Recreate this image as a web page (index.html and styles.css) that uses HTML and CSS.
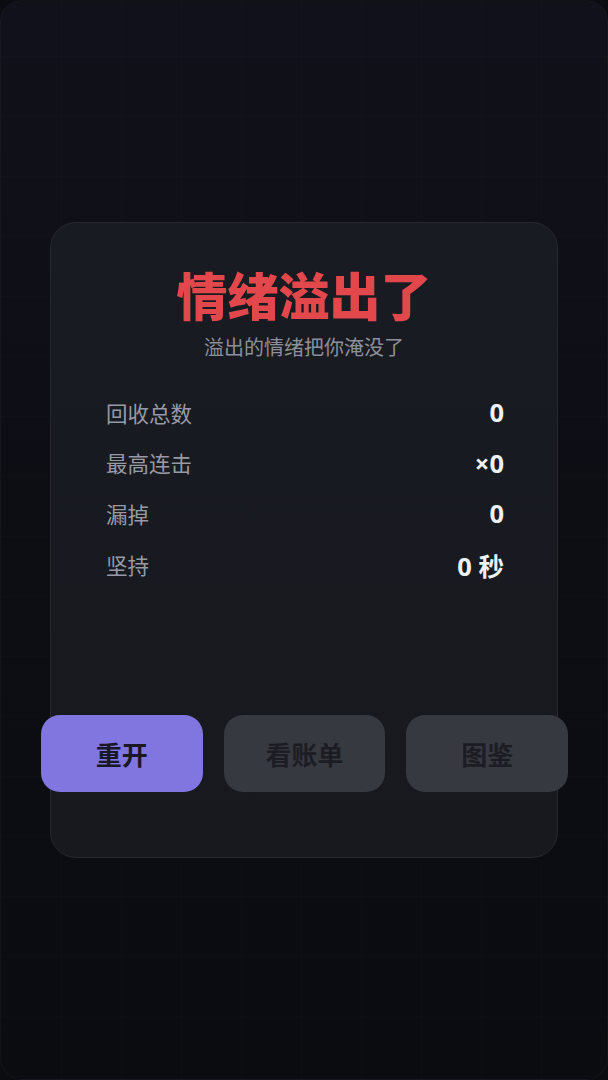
FILE: index.html
```html
<!DOCTYPE html>
<html lang="zh-CN">
<head>
<meta charset="utf-8">
<title>情绪溢出了</title>
<link rel="stylesheet" href="styles.css">
</head>
<body>
<div class="frame">
  <div class="card">
    <h1 class="title">情绪溢出了</h1>
    <p class="subtitle">溢出的情绪把你淹没了</p>
    <div class="stats">
      <div class="row"><span class="label">回收总数</span><span class="value">0</span></div>
      <div class="row"><span class="label">最高连击</span><span class="value">×0</span></div>
      <div class="row"><span class="label">漏掉</span><span class="value">0</span></div>
      <div class="row"><span class="label">坚持</span><span class="value">0 秒</span></div>
    </div>
    <div class="actions">
      <button class="btn primary">重开</button>
      <button class="btn">看账单</button>
      <button class="btn">图鉴</button>
    </div>
  </div>
</div>
</body>
</html>
```

FILE: styles.css
```css
html, body {
  margin: 0;
  padding: 0;
  background: #0b0c10;
}
body {
  width: 608px;
  height: 1080px;
  overflow: hidden;
  font-family: "Noto Sans CJK SC", "Noto Sans", sans-serif;
}
.frame {
  box-sizing: border-box;
  width: 608px;
  height: 1080px;
  border-radius: 22px;
  border: 1px solid rgba(255,255,255,0.03);
  background-color: #0d0e13;
  background-image:
    linear-gradient(rgba(255,255,255,0.009) 1px, transparent 1px),
    linear-gradient(90deg, rgba(255,255,255,0.009) 1px, transparent 1px),
    linear-gradient(180deg, #10111a 0%, #0d0e14 50%, #0b0c10 100%);
  background-size: 60px 60px, 60px 60px, 100% 100%;
  background-position: 0 -5px, 0 0, 0 0;
  padding-top: 221px;
}
.card {
  box-sizing: border-box;
  width: 508px;
  height: 636px;
  margin-left: 49px;
  border: 1px solid #26282f;
  border-radius: 26px;
  background: linear-gradient(180deg, #191b22 0%, #17191f 100%);
  padding: 41px 0 0;
  display: flex;
  flex-direction: column;
  align-items: stretch;
}
.title {
  margin: 0;
  text-align: center;
  font-size: 51px;
  line-height: 60px;
  font-weight: 900;
  color: #e2484b;
  letter-spacing: 0;
}
.subtitle {
  margin: 9px 0 0;
  text-align: center;
  font-size: 20px;
  line-height: 28px;
  color: #8d909b;
}
.stats {
  margin: 26px 53px 0 55px;
  display: flex;
  flex-direction: column;
}
.row {
  height: 50.6px;
  display: flex;
  align-items: center;
  justify-content: space-between;
}
.label {
  font-size: 21.5px;
  color: #979aa4;
}
.value {
  font-family: "Noto Sans", "Noto Sans CJK SC", sans-serif;
  font-size: 25.5px;
  font-weight: 700;
  color: #eef0f5;
}
.actions {
  margin: 126px -11px 0 -10px;
  display: grid;
  grid-template-columns: 1fr 1fr 1fr;
  gap: 21px;
}
.btn {
  height: 77px;
  border: none;
  border-radius: 19px;
  background: #373941;
  color: #1c1d24;
  font-family: "Noto Sans CJK SC", "Noto Sans", sans-serif;
  font-size: 26px;
  font-weight: 700;
  padding: 0;
}
.btn.primary {
  background: #8176e0;
  color: #181827;
}
```
